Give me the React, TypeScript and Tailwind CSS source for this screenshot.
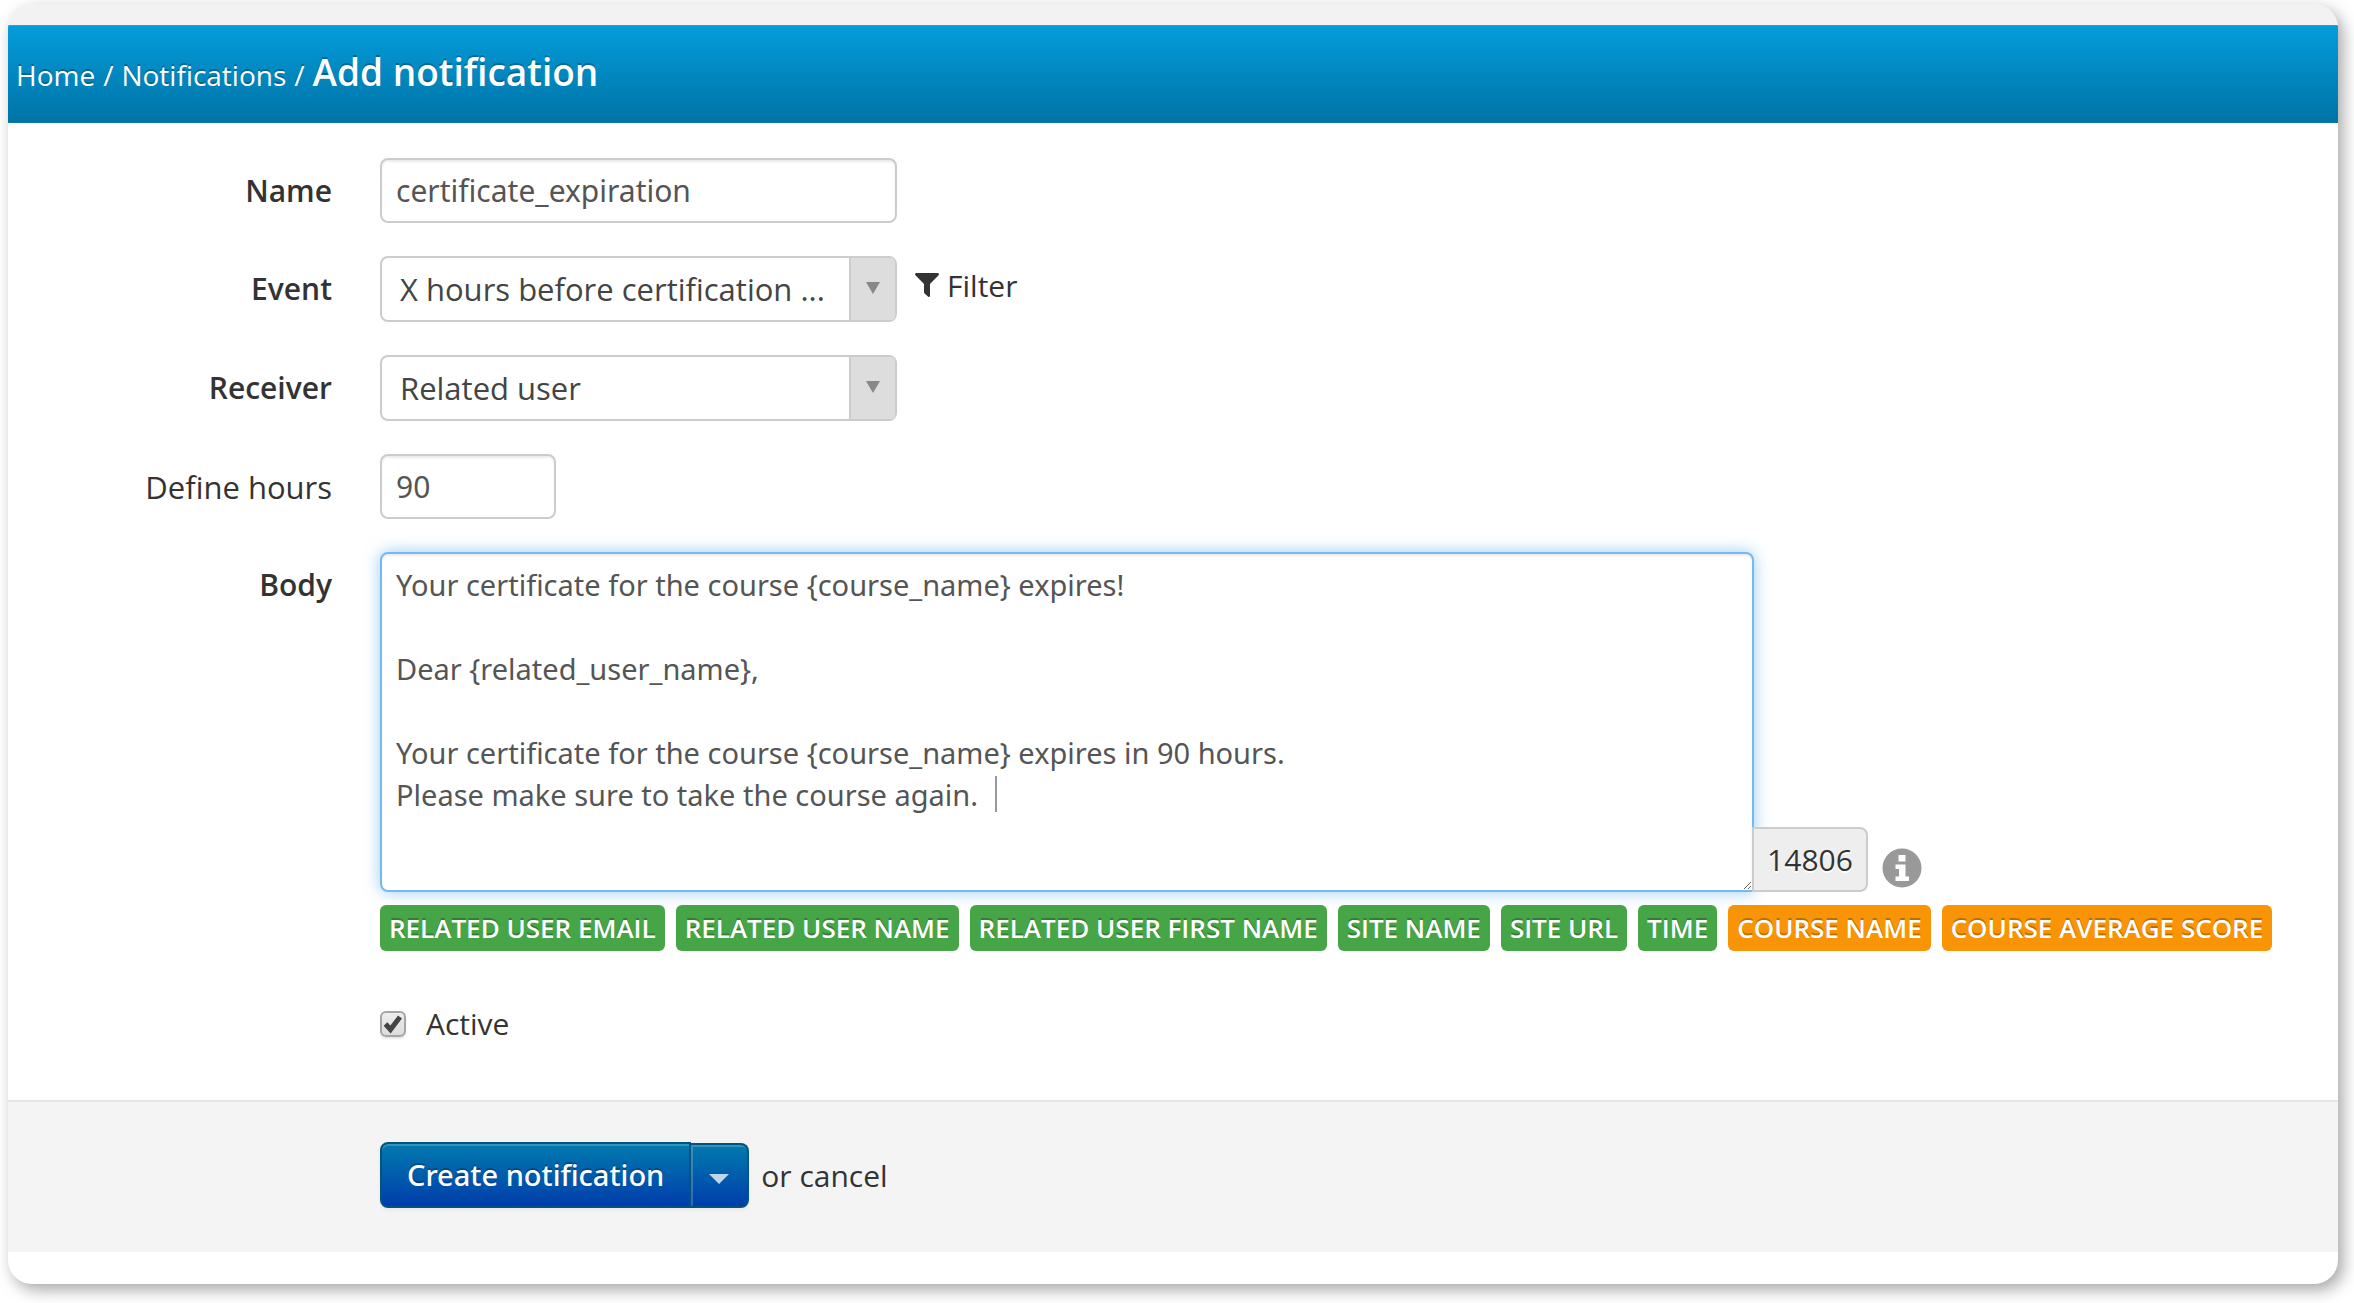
import React, { useState } from "react";
import clsx from "clsx";

const control =
  "block rounded-lg border-2 border-[#cccccc] bg-white text-[#555555] outline-none";
const textFont = "font-['Trebuchet_MS','Noto_Sans',sans-serif]";

const tags = [
  { label: "RELATED USER EMAIL", color: "bg-[#46a546]" },
  { label: "RELATED USER NAME", color: "bg-[#46a546]" },
  { label: "RELATED USER FIRST NAME", color: "bg-[#46a546]" },
  { label: "SITE NAME", color: "bg-[#46a546]" },
  { label: "SITE URL", color: "bg-[#46a546]" },
  { label: "TIME", color: "bg-[#46a546]" },
  { label: "COURSE NAME", color: "bg-[#f89406]" },
  { label: "COURSE AVERAGE SCORE", color: "bg-[#f89406]" },
];

const initialBody = `Your certificate for the course {course_name} expires!

Dear {related_user_name},

Your certificate for the course {course_name} expires in 90 hours.
Please make sure to take the course again. `;

function Row({
  id,
  label,
  bold = true,
  children,
}: {
  id: string;
  label: string;
  bold?: boolean;
  children: React.ReactNode;
}) {
  return (
    <div className="flex gap-12">
      <label
        htmlFor={id}
        className={clsx(
          "w-[324px] shrink-0 pt-3 text-right leading-[42px]",
          bold ? "font-semibold" : "text-[31px]",
        )}
      >
        {label}
      </label>
      <div className="min-w-0 flex-1">{children}</div>
    </div>
  );
}

function Select({ id, options }: { id: string; options: string[] }) {
  return (
    <div className="relative w-[517px] max-w-full">
      <select
        id={id}
        className="block h-[66px] w-full appearance-none rounded-lg border-2 border-[#cccccc] bg-white pl-[18px] pr-14 text-[31px] text-[#444444] outline-none"
      >
        {options.map((o) => (
          <option key={o}>{o}</option>
        ))}
      </select>
      <span className="pointer-events-none absolute inset-y-0.5 right-0.5 flex w-[46px] items-center justify-center rounded-r border-l-2 border-[#cccccc] bg-[#dddddd]">
        <svg viewBox="0 0 14 12" className="mb-0.5 h-3 w-3.5" fill="#888888">
          <path d="M0 0h14L7 12z" />
        </svg>
      </span>
    </div>
  );
}

export default function App() {
  const [name, setName] = useState("certificate_expiration");
  const [hours, setHours] = useState("90");
  const [body, setBody] = useState(initialBody);
  const [active, setActive] = useState(true);

  return (
    <div className="min-h-screen bg-white pt-1 pr-4 pb-5 pl-2 font-['Open_Sans',sans-serif] text-[30px] text-[#333333]">
      <main className="overflow-hidden rounded-[24px] bg-white pb-8 shadow-[5px_6px_16px_rgba(0,0,0,0.35)]">
        <div className="h-[21px] bg-[#f2f2f2]" />
        <nav
          aria-label="Breadcrumb"
          className="flex h-[98px] items-center border-y border-t-[#1ba4de] border-b-[#0a7aab] bg-linear-to-b from-[#049cdb] to-[#0074a6] px-2 pb-1 text-[28px] text-white [text-shadow:0_-2px_0_rgba(0,0,0,0.25)]"
        >
          <div className="flex items-baseline gap-2">
            <a href="#home">Home</a>
            <span>/</span>
            <a href="#notifications">Notifications</a>
            <span>/</span>
            <h1 className="text-[37px] font-semibold">Add notification</h1>
          </div>
        </nav>

        <form onSubmit={(e) => e.preventDefault()}>
          <div className="flex flex-col gap-[33px] pt-[35px]">
            <Row id="name" label="Name">
              <input
                id="name"
                value={name}
                onChange={(e) => setName(e.target.value)}
                className={clsx(
                  control,
                  textFont,
                  "h-[65px] w-[517px] px-3.5 shadow-[inset_0_2px_2px_rgba(0,0,0,0.075)]",
                )}
              />
            </Row>
            <Row id="event" label="Event">
              <div className="flex items-center gap-[18px]">
                <Select id="event" options={["X hours before certification ..."]} />
                <button type="button" className="flex items-center gap-2 pb-2">
                  <svg viewBox="0 0 24 24" className="size-6" fill="#333333">
                    <path d="M1 0h22q1.500 .8 .6 2.200L15 11v12q-.4 1.400-1.800 .8L9.600 20.400Q9 19.800 9 19v-8L.4 2.200Q-.5 .8 1 0z" />
                  </svg>
                  Filter
                </button>
              </div>
            </Row>
            <Row id="receiver" label="Receiver">
              <Select id="receiver" options={["Related user"]} />
            </Row>
            <Row id="hours" label="Define hours" bold={false}>
              <input
                id="hours"
                value={hours}
                onChange={(e) => setHours(e.target.value)}
                className={clsx(
                  control,
                  textFont,
                  "h-[65px] w-[176px] px-3.5 shadow-[inset_0_2px_2px_rgba(0,0,0,0.075)]",
                )}
              />
            </Row>
            <Row id="body" label="Body">
              <div className="flex items-end">
                <div className="relative w-[1374px]">
                  <textarea
                    id="body"
                    value={body}
                    onChange={(e) => setBody(e.target.value)}
                    className={clsx(
                      textFont,
                      "block h-[340px] w-full resize rounded-lg rounded-br-none border-2 border-[#74b9ef] bg-white px-3.5 py-2.5 text-[29px] leading-[42px] text-[#555555] shadow-[inset_0_2px_2px_rgba(0,0,0,0.075),0_0_16px_rgba(82,168,236,0.6)] outline-none",
                    )}
                  />
                  <span className="pointer-events-none absolute top-[224px] left-[615px] h-9 w-0.5 bg-[#999999]" />
                </div>
                <output
                  htmlFor="body"
                  className="relative -ml-0.5 flex h-[65px] w-[116px] items-center justify-center rounded-r-lg border-2 border-[#cccccc] bg-[#eeeeee] [text-shadow:0_2px_0_#ffffff]"
                >
                  14806
                </output>
                <svg viewBox="0 0 40 40" className="mb-1 ml-3.5 size-10" role="img" aria-label="Info">
                  <circle cx="20" cy="20" r="19.500" fill="#999999" />
                  <path
                    fill="#ffffff"
                    d="M16.500 7h7v6.500h-7zM13.500 16.500h10v12H27V33H13.500v-4.500H17V21h-3.500z"
                  />
                </svg>
              </div>
              <div className="mt-[13px] flex flex-wrap gap-[11px]">
                {tags.map((t) => (
                  <button
                    type="button"
                    key={t.label}
                    className={clsx(
                      "h-[46px] rounded-md px-[9px] text-[26px] font-semibold whitespace-nowrap text-white [text-shadow:0_-2px_0_rgba(0,0,0,0.25)]",
                      t.color,
                    )}
                  >
                    {t.label}
                  </button>
                ))}
              </div>
              <label className="mt-[52px] flex items-center gap-5 leading-[42px]">
                <span className="relative size-[26px]">
                  <input
                    type="checkbox"
                    checked={active}
                    onChange={(e) => setActive(e.target.checked)}
                    className="block size-[26px] appearance-none rounded-md border-2 border-[#a5a5a5] bg-linear-to-b from-[#eeeeee] to-[#dcdcdc] shadow-[0_2px_2px_rgba(0,0,0,0.1)]"
                  />
                  {active && (
                    <svg
                      viewBox="0 0 26 26"
                      className="pointer-events-none absolute inset-0 size-[26px]"
                      fill="none"
                      stroke="#444444"
                      strokeWidth="5"
                    >
                      <path d="M5.500 13l5 5.500L20 6" />
                    </svg>
                  )}
                </span>
                Active
              </label>
            </Row>
          </div>

          <div className="mt-[55px] flex h-[152px] items-center gap-3 border-t-2 border-[#e5e5e5] bg-[#f4f4f4] pb-1 pl-[372px]">
            <div className="flex items-end text-white">
              <button
                type="submit"
                className={clsx(
                  textFont,
                  "h-[66px] rounded-l-lg border-2 border-[#005580] bg-linear-to-b from-[#0079ad] to-[#003cab] px-[25px] text-[29px] font-medium shadow-[inset_0_2px_0_rgba(255,255,255,0.2),0_2px_4px_rgba(0,0,0,0.05)] [text-shadow:0_-2px_0_rgba(0,0,0,0.25)]",
                )}
              >
                Create notification
              </button>
              <button
                type="button"
                aria-label="More actions"
                className="flex h-[65px] w-[58px] items-center justify-center rounded-r-lg border-2 border-l-0 border-[#005580] bg-linear-to-b from-[#0079ad] to-[#003cab] shadow-[inset_2px_2px_0_rgba(255,255,255,0.2),0_2px_4px_rgba(0,0,0,0.05)]"
              >
                <svg viewBox="0 0 20 10" className="mt-1.5 h-2.5 w-5" fill="#ffffff" opacity="0.75">
                  <path d="M0 0h20L10 10z" />
                </svg>
              </button>
            </div>
            <span>
              or <a href="#cancel">cancel</a>
            </span>
          </div>
        </form>
      </main>
    </div>
  );
}
